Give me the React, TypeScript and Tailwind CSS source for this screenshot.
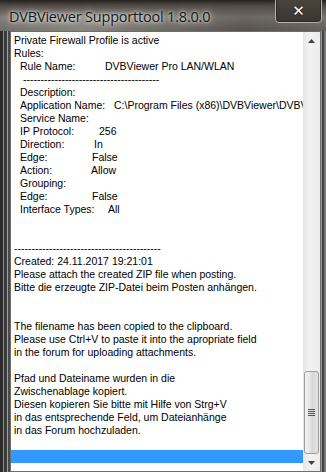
import React from "react";

// One line of the support log, optionally indented, with an optional value at a tab stop
interface LogLine {
  text?: string;
  indent?: boolean;
  value?: string;
  tab?: string; // label width class
}

const lines: LogLine[] = [
  { text: "Private Firewall Profile is active" },
  { text: "Rules:" },
  { text: "Rule Name:", indent: true, value: "DVBViewer Pro LAN/WLAN", tab: "w-[85px]" },
  { text: " ---------------------------------------", indent: true },
  { text: "Description:", indent: true },
  { text: "Application Name:", indent: true, value: "C:\\Program Files (x86)\\DVBViewer\\DVBViewer.exe", tab: "w-[94px]" },
  { text: "Service Name:", indent: true },
  { text: "IP Protocol:", indent: true, value: "256", tab: "w-[79px]" },
  { text: "Direction:", indent: true, value: "In", tab: "w-[74px]" },
  { text: "Edge:", indent: true, value: "False", tab: "w-[72px]" },
  { text: "Action:", indent: true, value: "Allow", tab: "w-[71px]" },
  { text: "Grouping:", indent: true },
  { text: "Edge:", indent: true, value: "False", tab: "w-[72px]" },
  { text: "Interface Types:", indent: true, value: "All", tab: "w-[88px]" },
  {},
  {},
  { text: "------------------------------------------" },
  { text: "Created: 24.11.2017 19:21:01" },
  { text: "Please attach the created ZIP file when posting." },
  { text: "Bitte die erzeugte ZIP-Datei beim Posten anhängen." },
  {},
  {},
  { text: "The filename has been copied to the clipboard." },
  { text: "Please use Ctrl+V to paste it into the apropriate field" },
  { text: "in the forum for uploading attachments." },
  {},
  { text: "Pfad und Dateiname wurden in die" },
  { text: "Zwischenablage kopiert." },
  { text: "Diesen kopieren Sie bitte mit Hilfe von Strg+V" },
  { text: "in das entsprechende Feld, um Dateianhänge" },
  { text: "in das Forum hochzuladen." },
  {},
];

function Arrow({ down }: { down?: boolean }) {
  return (
    <svg width="7" height="4" viewBox="0 0 7 4" className={down ? "rotate-180" : ""}>
      <path d="M3.5 0 L7 4 L0 4 Z" fill="#404040" />
    </svg>
  );
}

export default function App() {
  return (
    <div className="w-[326px] h-[472px] overflow-hidden flex flex-col bg-[linear-gradient(90deg,#6f6b66_0%,#8d8a85_25%,#6b6762_50%,#4a4540_75%,#5d5953_100%)] font-['Liberation_Sans',Arial,sans-serif]">
      {/* title bar */}
      <div className="h-[31px] shrink-0 flex items-start relative bg-[linear-gradient(180deg,#26221e_0%,#4f4a45_18%,rgba(150,146,140,0.45)_55%,rgba(120,116,110,0.25)_100%)]">
        <div className="pl-[9px] pt-[6px] text-[14.5px] text-[#161616] font-['Open_Sans',sans-serif] tracking-[-0.2px] [text-shadow:0_0_7px_rgba(255,255,255,0.95),0_0_3px_rgba(255,255,255,0.8)]">
          DVBViewer Supporttool 1.8.0.0
        </div>
        <div className="absolute left-[275px] top-[-2px] w-[47px] h-[25px] rounded-b-[4px] border border-[#b5b0aa] bg-[linear-gradient(180deg,#4a443e,#3a352f)] shadow-[inset_0_0_0_1px_rgba(40,36,32,0.8)] flex items-center justify-center">
          <span className="text-white text-[15px] font-bold leading-none mt-[2px] font-['DejaVu_Sans',sans-serif] [text-shadow:0_0_2px_rgba(0,0,0,0.9)]">✕</span>
        </div>
      </div>

      {/* body with frame */}
      <div className="flex-1 flex">
        <div className="w-[10px] shrink-0 bg-[linear-gradient(90deg,#2b2b2b_0px,#2b2b2b_3px,#8a8a8a_3px,#8a8a8a_4px,#3a3a3a_4px,#3a3a3a_7px,#a0a0a0_7px,#a0a0a0_8px,#4a4a4a_8px)]" />
        <div className="flex-1 flex border border-[#6d6d6d] bg-white min-w-0">
          <div className="flex-1 min-w-0 overflow-hidden pt-[2px] text-[10.5px] leading-[13px] text-black">
            {lines.map((l, i) => (
              <div key={i} className={`h-[13px] whitespace-pre ${l.indent ? "pl-[9px]" : "pl-[3px]"}`}>
                {l.value ? (
                  <>
                    <span className={`inline-block ${l.tab}`}>{l.text}</span>
                    <span>{l.value}</span>
                  </>
                ) : (
                  l.text ?? ""
                )}
              </div>
            ))}
            <div className="h-[13px] bg-[#3399ff]" />
          </div>

          {/* scrollbar */}
          <div className="w-[17px] shrink-0 bg-[linear-gradient(90deg,#e6e6e6,#f2f2f2_40%,#ececec)] flex flex-col items-center">
            <div className="h-[17px] flex items-center justify-center">
              <Arrow />
            </div>
            <div className="flex-1" />
            <div className="w-[15px] h-[83px] rounded-[3px] border border-[#9c9c9c] bg-[linear-gradient(90deg,#f3f3f3,#e2e2e2_45%,#d6d6d6_55%,#e4e4e4)] flex flex-col items-center justify-center gap-[1px]">
              <div className="w-[7px] h-[1px] bg-[#555]" />
              <div className="w-[7px] h-[1px] bg-[#555]" />
              <div className="w-[7px] h-[1px] bg-[#555]" />
              <div className="w-[7px] h-[1px] bg-[#555]" />
            </div>
            <div className="h-[17px] flex items-center justify-center">
              <Arrow down />
            </div>
          </div>
        </div>
        <div className="w-[5px] shrink-0 bg-[linear-gradient(90deg,#9a9a9a_0px,#9a9a9a_1px,#3e3e3e_1px,#3e3e3e_3px,#7a7a7a_3px)]" />
      </div>
    </div>
  );
}
